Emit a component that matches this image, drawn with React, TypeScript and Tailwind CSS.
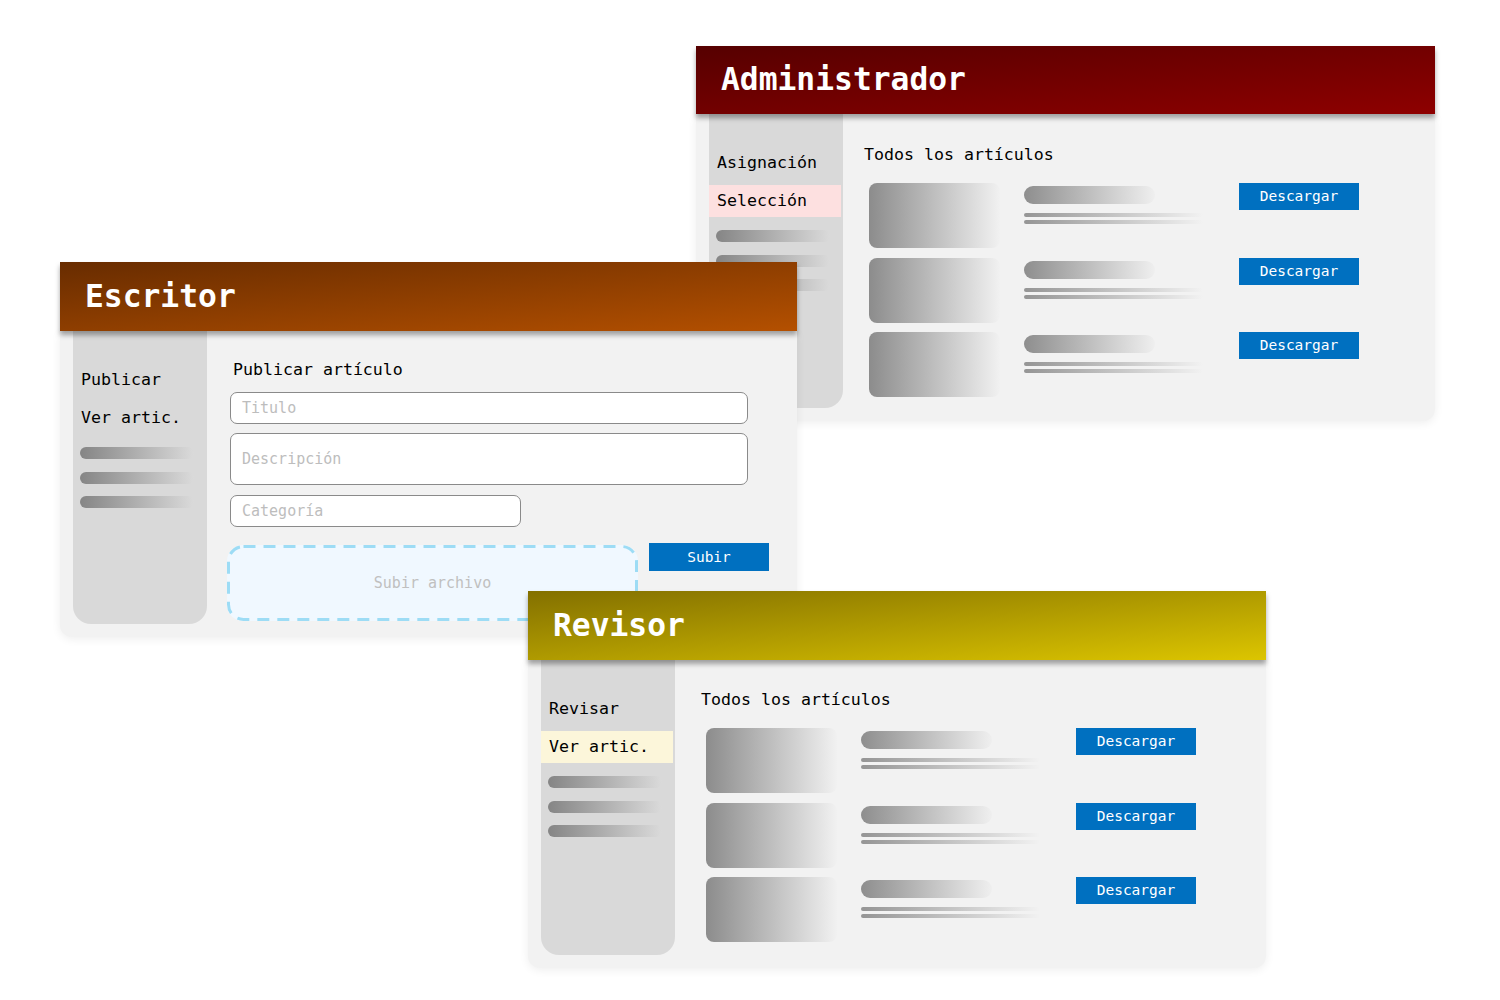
import React from "react";

type Item = { label: string; active?: boolean };

interface ISidebarProps {
  items: Item[];
  activeClass?: string;
}

const Sidebar = ({ items, activeClass = "" }: ISidebarProps) => (
  <div className="flex h-full w-[134px] shrink-0 flex-col rounded-b-[18px] bg-[#d9d9d9] pt-[33px]">
    <div className="flex flex-col gap-[6px]">
      {items.map((item) => (
        <div
          key={item.label}
          className={`mr-[2px] flex h-[32px] items-center px-[8px] pt-[1px] text-[16.6px] text-black ${item.active ? activeClass : ""}`}
        >
          {item.label}
        </div>
      ))}
    </div>
    {/* placeholder links */}
    <div className="mt-[13px] flex flex-col gap-[12.5px] px-[7px]">
      {[0, 1, 2].map((i) => (
        <div
          key={i}
          className="h-[12px] w-[114px] rounded-full bg-[linear-gradient(90deg,#858585,#dadada)]"
        />
      ))}
    </div>
  </div>
);

const ArticleRow = () => (
  <div className="flex items-start">
    <div className="h-[65px] w-[131px] rounded-[8px] bg-[linear-gradient(90deg,#8c8c8c,#f1f1f1)]" />
    <div className="ml-[24px] w-[180px] pt-[3px]">
      <div className="h-[18px] w-[131px] rounded-full bg-[linear-gradient(90deg,#8e8e8e,#efefef)]" />
      <div className="mt-[9px] h-[4px] w-[179px] rounded-full bg-[linear-gradient(90deg,#959595,#f2f2f2)]" />
      <div className="mt-[3px] h-[4px] w-[179px] rounded-full bg-[linear-gradient(90deg,#959595,#f2f2f2)]" />
    </div>
    <button className="ml-[35px] flex h-[27px] w-[120px] items-center justify-center bg-[#0070c0] pt-[1px] text-[14.5px] text-white">
      Descargar
    </button>
  </div>
);

interface IWindowProps {
  title: string;
  pos: string;
  headerBg: string;
  headerH: string;
  bodyH: string;
  children: React.ReactNode;
}

const Window = ({ title, pos, headerBg, headerH, bodyH, children }: IWindowProps) => (
  <div className={`absolute ${pos}`}>
    <div
      className={`relative z-10 flex items-center pl-[25px] shadow-[0_4px_5px_rgba(0,0,0,0.35)] ${headerBg} ${headerH}`}
    >
      <h1 className="text-[31.3px] font-bold leading-none text-white">{title}</h1>
    </div>
    <div
      className={`flex rounded-b-[12px] bg-[#f2f2f2] pb-[13px] pl-[13px] shadow-[0_2px_10px_rgba(0,0,0,0.07)] ${bodyH}`}
    >
      {children}
    </div>
  </div>
);

export default function App() {
  return (
    <div className="relative h-[1000px] w-[1500px] overflow-hidden bg-white font-['DejaVu_Sans_Mono',monospace]">
      {/* Administrador */}
      <Window
        title="Administrador"
        pos="left-[696px] top-[46px] w-[739px]"
        headerBg="bg-[linear-gradient(to_bottom_right,#560000,#8e0000)]"
        headerH="h-[68px]"
        bodyH="h-[307px]"
      >
        <Sidebar
          items={[{ label: "Asignación" }, { label: "Selección", active: true }]}
          activeClass="bg-[#fde0e0]"
        />
        <div className="pl-[21px] pt-[31px]">
          <p className="h-[20px] text-[16.6px] leading-[20px] text-black">Todos los artículos</p>
          <div className="mt-[18px] flex flex-col gap-[9.5px] pl-[5px]">
            <ArticleRow />
            <ArticleRow />
            <ArticleRow />
          </div>
        </div>
      </Window>

      {/* Escritor */}
      <Window
        title="Escritor"
        pos="left-[60px] top-[262px] w-[737px]"
        headerBg="bg-[linear-gradient(to_bottom_right,#682c00,#b45000)]"
        headerH="h-[69px]"
        bodyH="h-[306px]"
      >
        <Sidebar items={[{ label: "Publicar" }, { label: "Ver artic." }]} />
        <div className="pl-[23px] pt-[29px]">
          <p className="ml-[3px] h-[20px] text-[16.6px] leading-[20px] text-black">Publicar artículo</p>
          <div className="mt-[12px] flex h-[32px] w-[518px] items-center rounded-[7px] border border-[#8a8a8a] bg-white px-[11px] text-[15px] text-[#bdbdbd]">
            Titulo
          </div>
          <div className="mt-[9px] flex h-[52px] w-[518px] items-center rounded-[7px] border border-[#8a8a8a] bg-white px-[11px] text-[15px] text-[#bdbdbd]">
            Descripción
          </div>
          <div className="mt-[10px] flex h-[32px] w-[291px] items-center rounded-[7px] border border-[#8a8a8a] bg-white px-[11px] text-[15px] text-[#bdbdbd]">
            Categoría
          </div>
          <div className="mt-[16px] flex items-start">
            <div className="relative -ml-[3px] mt-[2px] flex h-[76px] w-[411px] items-center justify-center rounded-[16px] bg-[#f0f8ff] text-[15px] text-[#c0c0c0]">
              <svg className="absolute inset-0" width="411" height="76" viewBox="0 0 411 76" fill="none">
                <rect
                  x="1.5"
                  y="1.5"
                  width="408"
                  height="73"
                  rx="15"
                  stroke="#9ddcf5"
                  strokeWidth="3"
                  strokeDasharray="12 8"
                />
              </svg>
              <span className="relative">Subir archivo</span>
            </div>
            <button className="ml-[11px] flex h-[28px] w-[120px] items-center justify-center bg-[#0070c0] pt-[1px] text-[14.5px] text-white">
              Subir
            </button>
          </div>
        </div>
      </Window>

      {/* Revisor */}
      <Window
        title="Revisor"
        pos="left-[528px] top-[591px] w-[738px]"
        headerBg="bg-[linear-gradient(to_bottom_right,#837000,#dcc500)]"
        headerH="h-[69px]"
        bodyH="h-[308px]"
      >
        <Sidebar
          items={[{ label: "Revisar" }, { label: "Ver artic.", active: true }]}
          activeClass="bg-[#fcf6da]"
        />
        <div className="pl-[26px] pt-[30px]">
          <p className="h-[20px] text-[16.6px] leading-[20px] text-black">Todos los artículos</p>
          <div className="mt-[18px] flex flex-col gap-[9.5px] pl-[5px]">
            <ArticleRow />
            <ArticleRow />
            <ArticleRow />
          </div>
        </div>
      </Window>
    </div>
  );
}
